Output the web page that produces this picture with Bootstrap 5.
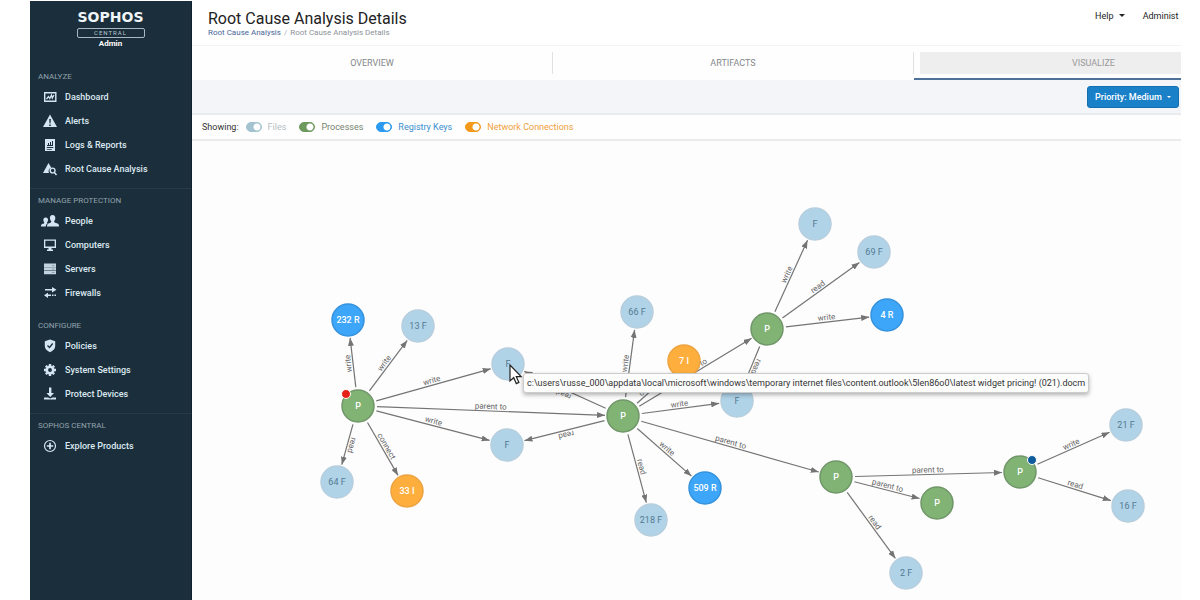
<!DOCTYPE html>
<html lang="en">
<head>
<meta charset="utf-8">
<meta name="viewport" content="width=device-width, initial-scale=1">
<title>Root Cause Analysis Details</title>
<link href="https://cdn.jsdelivr.net/npm/bootstrap@5.3.0/dist/css/bootstrap.min.css" rel="stylesheet">
<style>
  :root { --navy: #1a2e3b; --line: #e9ebec; --file: #b0d3e8; --proc: #80b374; --reg: #3ea6f8; --net: #fdae3d; }
  body { font-family: Roboto, "Liberation Sans", sans-serif; font-size: 9px; line-height: 12px; color: #333; background: #fff; padding: 1px 19px 0 30px; }
  .sidebar { width: 162px; background: var(--navy); border-right: 1px solid #10202c; }
  .brand { height: 68px; padding-top: 8px; color: #fff; }
  .brand-name { font: bold 14px/16px "DejaVu Sans", sans-serif; color: #eef4f8; }
  .brand-tag { width: 68px; height: 10px; margin-top: 3px; border: 1px solid #a9b8c2; border-radius: 2px; font-size: 6px; line-height: 8px; letter-spacing: 1px; color: #b9c6cf; }
  .brand-role { font-size: 8px; line-height: 12px; font-weight: 700; }
  .side-head { font-size: 8px; font-weight: 400; line-height: 16px; color: #93a3ae; padding-left: 8px; margin: 0; }
  .side-link { height: 24px; padding-left: 8px; color: #dde9f1; font-weight: 500; }
  .side-link:hover { color: #fff; }
  .side-icon { width: 27px; padding-left: 2px; color: #d5e6f2; }
  .side-icon svg { display: block; width: 20px; height: 16px; fill: currentColor; }
  .side-group { padding-bottom: 13px; }
  .side-group.ruled { padding-bottom: 7px; margin-bottom: 4px; border-bottom: 1px solid #263b48; }
  .page-head { height: 45px; padding: 9px 0 0 16px; border-bottom: 1px solid #f3f4f4; }
  .page-title { font-size: 16px; line-height: 18px; font-weight: 400; color: #222; margin: 0; }
  .crumbs { font-size: 8px; line-height: 10px; color: #8c9299; --bs-breadcrumb-item-padding-x: 3px; --bs-breadcrumb-divider-color: #a9adb2; }
  .crumbs a { color: #486699; }
  .top-menu { width: 86px; gap: 18px; }
  .top-menu button { font-size: 9px; line-height: 13px; font-weight: 400; color: #222; -webkit-text-stroke: 0; }
  .caret { display: inline-block; border: 3px solid transparent; border-top-color: currentColor; border-bottom: 0; margin-left: 3px; vertical-align: 2px; }
  .view-tabs { height: 34px; padding-top: 6px; background: #fefefe; }
  .view-tab { flex: 0 0 36.5%; height: 28px; color: #85888b; border: 0; background: none; padding: 0 0 6px; }
  .view-tab span { display: block; line-height: 22px; border-right: 1px solid #dfe1e2; }
  .view-tab.active { border-bottom: 2px solid #4d7198; padding: 0 0 4px 6px; }
  .view-tab.active span { background: #eee; color: #999; border: 0; padding-right: 8px; }
  .filter-bar { height: 35px; background: #f4f5f8; border-bottom: 2px solid var(--line); padding-right: 2px; }
  .btn-priority { width: 92px; height: 22px; padding: 0; font-size: 9px; line-height: 12px; font-weight: 500; color: #fff; background: #1a80c8; border: 1px solid #156fae; border-radius: 3px; }
  .btn-priority:hover { color: #fff; background: #156fae; }
  .btn-priority .caret { border-width: 2px; border-bottom: 0; }
  .legend-row { height: 26px; padding-left: 10px; border-bottom: 2px solid var(--line); background: #fefefe; gap: 13px; }
  .legend-row > span { margin-right: -6px; }
  .legend-item { gap: 6px; color: var(--tone); }
  .legend-item .form-check-input { width: 16px; height: 10px; margin: 0; border: 1px solid var(--tone); border-radius: 5px; background: radial-gradient(circle at 10px 4px, #fff 3px, transparent 4px) var(--tone); }
  .tone-file { --tone: #a3c3d0; } .tone-file label { color: #b5bec4; }
  .tone-proc { --tone: #6d9a5c; } .tone-proc label { color: #75836f; }
  .tone-reg { --tone: #2b9af0; } .tone-reg label { color: #3c8fd0; }
  .tone-net { --tone: #f39a1d; } .tone-net label { color: #f0a040; }
  .canvas { min-height: 459px; background: #fdfdfd; overflow: hidden; }
  .canvas svg.graph { position: absolute; inset: 0; width: 100%; height: 100%; }
  .graph text { text-anchor: middle; }
  .edge-line { stroke: #747474; stroke-width: 1.2; }
  .edge-label { font-size: 8px; fill: #666; }
  .node-label { font-size: 9px; font-weight: 500; fill: #fff; }
  .kind-F .node-label { fill: #537a92; font-weight: 400; }
  .kind-F circle.disc { fill: var(--file); stroke: #b6cedd; }
  .kind-P circle.disc { fill: var(--proc); stroke: #71966a; }
  .kind-R circle.disc { fill: var(--reg); stroke: #3592dc; }
  .kind-I circle.disc { fill: var(--net); stroke: #eda342; }
  .path-tip { position: absolute; left: 331px; top: 232px; height: 20px; padding: 0 3px; line-height: 19px; font-size: 9px; color: #333; background: #fdfdfd; border: 1px solid #ccc; border-radius: 3px; box-shadow: 0 2px 4px rgba(0,0,0,.3); }
  .pointer { position: absolute; left: 317px; top: 223px; }
</style>
</head>
<body class="d-flex min-vh-100">
<svg class="d-none" aria-hidden="true">
  <symbol id="i-dash" viewBox="0 0 20 16"><path fill-rule="evenodd" d="M4 3h12.500v10H4zM5.400 4.400v7.200h9.700V4.400z"/><path fill="none" stroke="currentColor" stroke-width="1.300" d="M6.500 10l2-2.500 1.300 2L11.500 6l.8 3L14 6"/></symbol>
  <symbol id="i-alert" viewBox="0 0 20 16"><path fill-rule="evenodd" d="M10 1.500 17 14H3zM9.200 6l.3 4.500h1L10.900 6zM9.200 11.500h1.600V13H9.200z"/></symbol>
  <symbol id="i-logs" viewBox="0 0 20 16"><path fill-rule="evenodd" d="M5 2h10v12H5zM7 8h1V6h1v2h1V5h1v3h1V4h1v5H7zM6.800 10h6.500v1H6.800zM6.800 12h5v.800h-5z"/></symbol>
  <symbol id="i-rca" viewBox="0 0 20 16"><path d="M8.500 2l2.700 4.400A4 4 0 0 0 9 12H3z"/><path fill="none" stroke="currentColor" stroke-width="1.400" d="M15 9.500a2.400 2.400 0 1 1-4.800 0 2.400 2.400 0 0 1 4.800 0zM14.300 11.300 16.500 14"/></symbol>
  <symbol id="i-people" viewBox="0 0 20 16"><path d="M12.500 2c2 0 3 1.500 2.800 3.400-.1 1.400-.700 2-1.200 2.800 0 1.300 1 1.400 2.900 2.100 1.600.600 2 1.500 2 3.200H7c0-1.700.500-2.500 2-3.200 1.600-.600 2.300-.8 2.300-2.100-.6-.7-1.100-1.500-1.300-2.800C9.800 3.500 10.600 2 12.500 2z"/><path d="M5.700 4.500c1.800 0 2.600 1.400 2.300 3-.1.800-.5 1.300-1 1.900 0 .5.200.7.600.9-1.200.8-1.700 1.700-1.800 3.200H1c0-1.500.3-2.200 1.600-2.700 1-.3 1.700-.6 1.700-1.400-.5-.6-.8-1.100-.9-1.900-.2-1.600.5-3 2.300-3z"/></symbol>
  <symbol id="i-pc" viewBox="0 0 20 16"><path fill-rule="evenodd" d="M4 2.500h12v8.500h-4.500v1.500H13V14H7v-1.500h1.500V11H4zM5.300 3.800v5.800h9.400V3.800z"/></symbol>
  <symbol id="i-server" viewBox="0 0 20 16"><path opacity=".9" d="M4 2.500h12v3.400H4zM4 6.200h12v3.400H4zM4 9.900h12v3.400H4z"/><path stroke="#8ba0ae" d="M12 4.500h2.500M12 8h2.500M12 11.500h2.500"/></symbol>
  <symbol id="i-fire" viewBox="0 0 20 16"><path d="M5 4h7V2l4.500 2.800L12 7.500V5.600H5zM16 9.500h-1.500V11H16zM13.500 9.500H12V11h1.500zM11 9.500H8V7.700L4 10.300 8 13v-2h3z"/></symbol>
  <symbol id="i-shield" viewBox="0 0 20 16"><path d="M10 1.500l5.200 1.700V8c0 3-2.200 4.900-5.200 6.200C7 12.900 4.800 11 4.800 8V3.200z"/><path fill="none" stroke="#1a2e3b" stroke-width="1.300" d="M7.500 7.500l2 2 3.200-4"/></symbol>
  <symbol id="i-gear" viewBox="0 0 20 16"><circle cx="10" cy="8" r="3.200" fill="none" stroke="currentColor" stroke-width="2.600"/><path fill="none" stroke="currentColor" stroke-width="2.400" d="M10 2v2M10 12v2M4 8h2M14 8h2M5.800 3.800l1.400 1.400M12.800 10.800l1.400 1.400M5.800 12.200l1.400-1.400M12.800 5.200l1.400-1.400"/></symbol>
  <symbol id="i-down" viewBox="0 0 20 16"><path d="M9 1.500h2.400V7H14l-3.800 4L6.400 7H9zM4 11.500h4l2.200 1 2.200-1H16v2H4z"/></symbol>
  <symbol id="i-plus" viewBox="0 0 20 16"><circle cx="10" cy="8" r="5.500" fill="none" stroke="currentColor" stroke-width="1.200"/><path stroke="currentColor" stroke-width="1.700" d="M10 4.800v6.400M6.800 8h6.400"/></symbol>
</svg>

<aside class="sidebar flex-shrink-0">
  <div class="brand d-flex flex-column align-items-center">
    <div class="brand-name">SOPHOS</div>
    <div class="brand-tag text-center">CENTRAL</div>
    <div class="brand-role">Admin</div>
  </div>
  <nav aria-label="Main">
    <div class="side-group ruled">
      <h2 class="side-head">ANALYZE</h2>
      <a href="#" class="side-link d-flex align-items-center text-decoration-none"><span class="side-icon"><svg><use href="#i-dash"/></svg></span>Dashboard</a>
      <a href="#" class="side-link d-flex align-items-center text-decoration-none"><span class="side-icon"><svg><use href="#i-alert"/></svg></span>Alerts</a>
      <a href="#" class="side-link d-flex align-items-center text-decoration-none"><span class="side-icon"><svg><use href="#i-logs"/></svg></span>Logs &amp; Reports</a>
      <a href="#" class="side-link d-flex align-items-center text-decoration-none"><span class="side-icon"><svg><use href="#i-rca"/></svg></span>Root Cause Analysis</a>
    </div>
    <div class="side-group">
      <h2 class="side-head">MANAGE PROTECTION</h2>
      <a href="#" class="side-link d-flex align-items-center text-decoration-none"><span class="side-icon"><svg><use href="#i-people"/></svg></span>People</a>
      <a href="#" class="side-link d-flex align-items-center text-decoration-none"><span class="side-icon"><svg><use href="#i-pc"/></svg></span>Computers</a>
      <a href="#" class="side-link d-flex align-items-center text-decoration-none"><span class="side-icon"><svg><use href="#i-server"/></svg></span>Servers</a>
      <a href="#" class="side-link d-flex align-items-center text-decoration-none"><span class="side-icon"><svg><use href="#i-fire"/></svg></span>Firewalls</a>
    </div>
    <div class="side-group ruled">
      <h2 class="side-head">CONFIGURE</h2>
      <a href="#" class="side-link d-flex align-items-center text-decoration-none"><span class="side-icon"><svg><use href="#i-shield"/></svg></span>Policies</a>
      <a href="#" class="side-link d-flex align-items-center text-decoration-none"><span class="side-icon"><svg><use href="#i-gear"/></svg></span>System Settings</a>
      <a href="#" class="side-link d-flex align-items-center text-decoration-none"><span class="side-icon"><svg><use href="#i-down"/></svg></span>Protect Devices</a>
    </div>
    <div class="side-group">
      <h2 class="side-head">SOPHOS CENTRAL</h2>
      <a href="#" class="side-link d-flex align-items-center text-decoration-none"><span class="side-icon"><svg><use href="#i-plus"/></svg></span>Explore Products</a>
    </div>
  </nav>
</aside>

<main class="d-flex flex-column flex-grow-1 overflow-hidden">
  <header class="page-head d-flex justify-content-between">
    <div>
      <h1 class="page-title">Root Cause Analysis Details</h1>
      <nav aria-label="Breadcrumb">
        <ol class="breadcrumb crumbs m-0">
          <li class="breadcrumb-item"><a href="#" class="text-decoration-none">Root Cause Analysis</a></li>
          <li class="breadcrumb-item" aria-current="page">Root Cause Analysis Details</li>
        </ol>
      </nav>
    </div>
    <div class="top-menu d-flex align-items-start flex-shrink-0 text-nowrap">
      <button type="button" class="btn p-0 border-0">Help <span class="caret"></span></button>
      <button type="button" class="btn p-0 border-0">Administ</button>
    </div>
  </header>

  <div class="view-tabs d-flex overflow-hidden" role="tablist">
    <button type="button" class="view-tab" role="tab"><span>OVERVIEW</span></button>
    <button type="button" class="view-tab" role="tab"><span>ARTIFACTS</span></button>
    <button type="button" class="view-tab active" role="tab" aria-selected="true"><span>VISUALIZE</span></button>
  </div>

  <div class="filter-bar d-flex align-items-center justify-content-end">
    <button type="button" class="btn btn-priority">Priority: Medium <span class="caret"></span></button>
  </div>

  <div class="legend-row d-flex align-items-center text-nowrap">
    <span>Showing:</span>
    <div class="legend-item tone-file d-flex align-items-center"><input class="form-check-input" type="checkbox" id="t-file" checked><label for="t-file">Files</label></div>
    <div class="legend-item tone-proc d-flex align-items-center"><input class="form-check-input" type="checkbox" id="t-proc" checked><label for="t-proc">Processes</label></div>
    <div class="legend-item tone-reg d-flex align-items-center"><input class="form-check-input" type="checkbox" id="t-reg" checked><label for="t-reg">Registry Keys</label></div>
    <div class="legend-item tone-net d-flex align-items-center"><input class="form-check-input" type="checkbox" id="t-net" checked><label for="t-net">Network Connections</label></div>
  </div>

  <section class="canvas position-relative flex-grow-1" aria-label="Process graph">
    <svg class="graph" id="graph">
      <defs><marker id="arrow" viewBox="0 0 8 6" refX="8" refY="3" markerWidth="8" markerHeight="6" markerUnits="userSpaceOnUse" orient="auto"><path d="M0 0 8 3 0 6z" fill="#747474"/></marker></defs>
    </svg>
    <div class="path-tip text-nowrap" role="tooltip">c:\users\russe_000\appdata\local\microsoft\windows\temporary internet files\content.outlook\5len86o0\latest widget pricing! (021).docm</div>
    <svg class="pointer" width="14" height="22" viewBox="0 0 14 22"><path d="M1 1v16l3.700-3.400 2.600 6 2.600-1.200-2.600-5.700h4.900z" fill="#fff" stroke="#222" stroke-width="1.200"/></svg>
  </section>
</main>

<script src="https://cdn.jsdelivr.net/npm/bootstrap@5.3.0/dist/js/bootstrap.bundle.min.js"></script>
<script>
  // id: [x, y, kind, label, status dot colour]
  const nodes = {
    root: [166, 265, 'P', 'P', '#e62117'], mail: [431, 275, 'P', 'P'], word: [575, 188, 'P', 'P'],
    shell: [644, 336, 'P', 'P'], child: [745, 362, 'P', 'P'], last: [828, 331, 'P', 'P', '#0f5c9c'],
    r232: [156, 179, 'R', '232 R'], f13: [226, 185, 'F', '13 F'], fDoc: [316, 223, 'F', 'F'],
    fLow: [315, 304, 'F', 'F'], f64: [145, 341, 'F', '64 F'], i33: [215, 350, 'I', '33 I'],
    f66: [445, 171, 'F', '66 F'], i7: [492, 220, 'I', '7 I'], fMid: [545, 260, 'F', 'F'],
    r509: [513, 347, 'R', '509 R'], f218: [459, 379, 'F', '218 F'], fTop: [623, 83, 'F', 'F'],
    f69: [682, 111, 'F', '69 F'], r4: [695, 174, 'R', '4 R'], f2: [714, 432, 'F', '2 F'],
    f21: [934, 284, 'F', '21 F'], f16: [936, 365, 'F', '16 F']
  };
  const edges = [
    ['root', 'r232', 'write'], ['root', 'f13', 'write'], ['root', 'fDoc', 'write'], ['root', 'mail', 'parent to'],
    ['root', 'fLow', 'write'], ['root', 'f64', 'read'], ['root', 'i33', 'connect'],
    ['mail', 'fDoc', 'read'], ['mail', 'fLow', 'read'], ['mail', 'f66', 'write'], ['mail', 'i7', 'connect'],
    ['mail', 'word', 'parent to'], ['mail', 'fMid', 'write'], ['mail', 'r509', 'write'], ['mail', 'f218', 'read'],
    ['mail', 'shell', 'parent to'], ['word', 'fTop', 'write'], ['word', 'f69', 'read'], ['word', 'r4', 'write'],
    ['word', 'fMid', 'read'], ['shell', 'last', 'parent to'], ['shell', 'child', 'parent to'], ['shell', 'f2', 'read'],
    ['last', 'f21', 'write'], ['last', 'f16', 'read']
  ];
  const graph = document.getElementById('graph');
  function add(parent, tag, attrs, text) {
    const el = document.createElementNS('http://www.w3.org/2000/svg', tag);
    for (const k in attrs) el.setAttribute(k, attrs[k]);
    if (text) el.textContent = text;
    return parent.appendChild(el);
  }
  for (const [from, to, label] of edges) {
    const [x1, y1] = nodes[from], [x2, y2] = nodes[to];
    const len = Math.hypot(x2 - x1, y2 - y1);
    // Draw along the x axis, then turn the group so the label follows its line.
    const g = add(graph, 'g', { transform: `translate(${x1} ${y1}) rotate(${Math.atan2(y2 - y1, x2 - x1) * 180 / Math.PI})` });
    add(g, 'line', { class: 'edge-line', x1: 19, y1: 0, x2: len - 18, y2: 0, 'marker-end': 'url(#arrow)' });
    add(g, 'text', { class: 'edge-label', x: len / 2, y: -2 }, label);
  }
  for (const [x, y, kind, label, dot] of Object.values(nodes)) {
    const g = add(graph, 'g', { class: 'kind-' + kind, transform: `translate(${x} ${y})` });
    add(g, 'circle', { class: 'disc', r: 16, 'stroke-width': 1.5 });
    add(g, 'text', { class: 'node-label', y: 3 }, label);
    if (dot) add(g, 'circle', { cx: 12 * (x < 400 ? -1 : 1), cy: -12, r: 4.5, fill: dot, stroke: '#fff' });
  }
</script>
</body>
</html>
